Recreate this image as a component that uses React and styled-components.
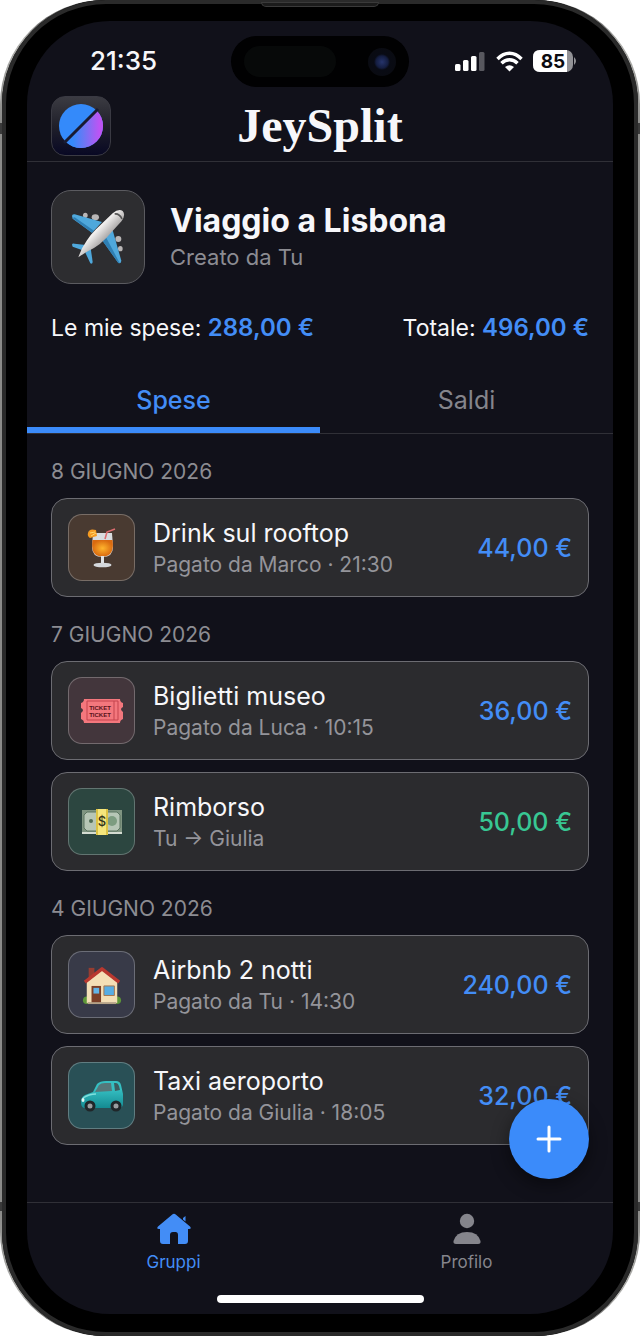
import React, { useState } from 'react';
import styled, { createGlobalStyle } from 'styled-components';

const GlobalStyle = createGlobalStyle`
  * {
    box-sizing: border-box;
  }

  body {
    margin: 0;
    background: #fff;
    font-family: Inter, 'Liberation Sans', sans-serif;
    color: #f7f7fa;
  }

  button {
    font: inherit;
    border: none;
    padding: 0;
    background: none;
    cursor: pointer;
  }
`;

// the two dark stops are the antenna bands
const Phone = styled.div`
  padding: 0 2px;
  border-radius: 104px;
  background: linear-gradient(
    #333 0,
    #b0b0ad 40px,
    #8c8c8a 123px,
    #3a3a3a 123px 134px,
    #8c8c8a 134px,
    #8c8c8a calc(100% - 134px),
    #3a3a3a calc(100% - 134px) calc(100% - 125px),
    #8c8c8a calc(100% - 125px),
    #b0b0ad calc(100% - 40px),
    #333 100%
  );
`;

const Bezel = styled.div`
  position: relative;
  padding: 21px 25px 22px;
  border-radius: 104px;
  background: #000;
  box-shadow: inset 0 0 0 4px #2a2a2a;
`;

const Speaker = styled.div`
  position: absolute;
  top: 2px;
  left: 50%;
  width: 118px;
  height: 5px;
  margin-left: -59px;
  border: 1px solid #3a3a3a;
  border-radius: 0 0 5px 5px;
  background: #1b1b1b;
`;

const Screen = styled.div`
  position: relative;
  border-radius: 83px;
  background: #11111a;
  overflow: hidden;
`;

const StatusBar = styled.div`
  display: flex;
  justify-content: space-between;
  align-items: center;
  height: 69px;
  padding: 11px 36px 0 63px;
`;

const Clock = styled.time`
  font-size: 26px;
  line-height: 32px;
  font-weight: 500;
`;

const Island = styled.div`
  position: absolute;
  top: 15px;
  left: 50%;
  display: flex;
  align-items: center;
  justify-content: space-between;
  width: 178px;
  height: 51px;
  margin-left: -89px;
  padding: 0 13px;
  border-radius: 26px;
  background: #010102;
`;

const Sensor = styled.div`
  width: 92px;
  height: 31px;
  border-radius: 16px;
  background: #070909;
`;

const Lens = styled.div`
  width: 28px;
  height: 28px;
  border-radius: 50%;
  background: radial-gradient(circle, #26346b 0, #141d40 6px, #090b14 8px, #0a0b10 100%);
`;

const StatusIcons = styled.div`
  display: flex;
  align-items: center;
  gap: 10px;
`;

const Header = styled.header`
  display: grid;
  grid-template-columns: 60px 1fr 60px;
  align-items: center;
  padding: 6px 24px 5px;
  border-bottom: 1px solid #303037;
`;

const LogoTile = styled.div`
  display: grid;
  place-items: center;
  width: 60px;
  height: 60px;
  border: 1px solid #3a3a43;
  border-radius: 14px;
  background: linear-gradient(#3b3b42, #20202a 50%, #080824);
`;

const Brand = styled.h1`
  margin: 0;
  font-family: 'Liberation Serif', serif;
  font-size: 48px;
  line-height: 56px;
  font-weight: 700;
  text-align: center;
`;

const Group = styled.section`
  display: flex;
  align-items: center;
  gap: 25px;
  padding: 28px 24px;
`;

const GroupIcon = styled.div`
  display: grid;
  place-items: center;
  width: 94px;
  height: 94px;
  border: 1px solid #5b5b60;
  border-radius: 20px;
  background: #2d2d30;
`;

const GroupName = styled.h2`
  margin: 0;
  font-size: 32px;
  line-height: 40px;
  font-weight: 700;
`;

const GroupMeta = styled.p`
  margin: 0;
  font-size: 22px;
  line-height: 32px;
  color: #8c8c92;
`;

const Summary = styled.div`
  display: flex;
  justify-content: space-between;
  padding: 0 24px 22px;
  font-size: 23px;
  line-height: 32px;
`;

const Figure = styled.strong`
  font-size: 24px;
  font-weight: 600;
  color: #438df6;
`;

const Tabs = styled.div`
  display: grid;
  grid-template-columns: 1fr 1fr;
  border-bottom: 1px solid #303037;
`;

const Tab = styled.button`
  height: 67px;
  && {
    padding-top: 6px;
    border-bottom: 6px solid ${props => (props.$active ? '#3b8bfa' : 'transparent')};
    font-size: 25px;
    font-weight: ${props => (props.$active ? 500 : 400)};
    color: ${props => (props.$active ? '#438df6' : '#85858c')};
  }
`;

const Feed = styled.main`
  padding: 0 24px 57px;
`;

const DateLabel = styled.h3`
  margin: 0;
  padding: 25px 0 13px;
  font-size: 21px;
  line-height: 26px;
  font-weight: 400;
  color: #8c8c92;
`;

const Cards = styled.div`
  display: grid;
  gap: 12px;
`;

const Card = styled.article`
  display: flex;
  align-items: center;
  gap: 18px;
  padding: 15px 16px;
  border: 1px solid #6c6c72;
  border-radius: 16px;
  background: #2b2b2e;
`;

const CardIcon = styled.div`
  display: grid;
  place-items: center;
  width: 67px;
  height: 67px;
  border: 1px solid rgba(255, 255, 255, 0.26);
  border-radius: 14px;
  background: ${props => props.$tint};
`;

const CardText = styled.div`
  flex: 1;
  padding-top: 2px;
`;

const CardTitle = styled.div`
  font-size: 25px;
  line-height: 32px;
`;

const CardMeta = styled.div`
  font-size: 21px;
  line-height: 32px;
  color: #94949a;
`;

const Amount = styled.div`
  font-size: 25px;
  line-height: 32px;
  font-weight: 500;
  color: ${props => (props.$refund ? '#38c793' : '#438df6')};
`;

const Footer = styled.footer`
  position: relative;
  border-top: 1px solid #303037;
`;

const AddButton = styled.button`
  position: absolute;
  right: 24px;
  bottom: 100%;
  display: grid;
  place-items: center;
  width: 80px;
  height: 80px;
  margin-bottom: 24px;
  && {
    border-radius: 50%;
    background: #3b8bfa;
    box-shadow: 0 6px 18px rgba(0, 0, 0, 0.45);
  }
`;

const Nav = styled.nav`
  display: grid;
  grid-template-columns: 1fr 1fr;
`;

const NavLink = styled.a`
  display: flex;
  flex-direction: column;
  align-items: center;
  gap: 5px;
  padding: 10px 0 21px;
  font-size: 17px;
  line-height: 24px;
  text-decoration: none;
  color: ${props => (props.$active ? '#438df6' : '#85858c')};
`;

const HomeBar = styled.div`
  width: 207px;
  height: 8px;
  margin: 0 auto 11px;
  border-radius: 4px;
  background: #fff;
`;

const PlaneIcon = () => (
  <svg width="54" height="56" viewBox="35 41 162 168" aria-hidden="true">
    <defs>
      <linearGradient id="fuselage" x1="0.35" y1="0.35" x2="0.65" y2="0.65">
        <stop offset="0.2" stopColor="#f4f2f1" />
        <stop offset="0.9" stopColor="#a5a2a2" />
      </linearGradient>
    </defs>
    <g fill="#b9b6b6">
      <ellipse cx="78" cy="60" rx="7" ry="8" />
      <ellipse cx="108" cy="66" rx="11" ry="9" />
      <ellipse cx="177" cy="131" rx="9" ry="9" />
      <ellipse cx="183" cy="160" rx="7" ry="8" />
    </g>
    <path d="M38 62Q38 56 46 57L128 80 98 112 40 70Z" fill="#4fa8dc" />
    <path d="M39 68 98 112 104 106 46 66Z" fill="#2f7fb4" />
    <path d="M128 134 160 105 186 196Q185 206 177 203Z" fill="#4fa8dc" />
    <path d="M128 134 177 203 181 203 140 126Z" fill="#2f7fb4" />
    <path d="M38 148Q39 143 46 145L86 150 74 166 40 154Z" fill="#4fa8dc" />
    <path d="M78 172 94 158 100 200Q99 207 93 204Z" fill="#4fa8dc" />
    <path
      d="M57 186Q66 158 82 136 92 120 110 102L160 54Q178 39 190 47 200 58 187 77L140 129Q122 148 104 158 86 166 57 186Z"
      fill="url(#fuselage)"
    />
    <path d="M166 56Q180 54 188 71" fill="none" stroke="#555" strokeWidth="5" />
  </svg>
);

const DrinkIcon = () => (
  <svg width="30" height="40" viewBox="0 0 30 40" aria-hidden="true">
    <defs>
      <radialGradient id="juice">
        <stop offset="0" stopColor="#ffb52d" />
        <stop offset="1" stopColor="#d96a10" />
      </radialGradient>
    </defs>
    <path d="M6 5H25L26 19Q26 29 15.500 29T5 19Z" fill="#d9dcdf" />
    <path d="M5.500 12H25.500Q28 28.500 15.500 28.500T5.500 12Z" fill="url(#juice)" />
    <path d="M18 11 20 4 28 1" fill="none" stroke="#dc6d70" strokeWidth="1.600" />
    <path d="M1 5Q2 0 9 2L10 8 3 10Q0 8 1 5Z" fill="#f69b21" />
    <path d="M3 5 8 4M4 8 9 5" stroke="#ffd66e" />
    <path d="M15.500 28V36" stroke="#dfe2e5" strokeWidth="3" />
    <ellipse cx="15.500" cy="37" rx="9" ry="2.300" fill="#d5d8dc" />
  </svg>
);

const TicketIcon = () => (
  <svg width="44" height="26" viewBox="0 0 44 26" aria-hidden="true">
    <path
      d="M4 1H40Q40 4 43 5V9Q39 11 43 14V21Q40 22 40 25H4Q4 22 1 21V15Q5 12 1 10V5Q4 4 4 1Z"
      fill="#f4777d"
    />
    <path d="M7 3H38V22H7ZM34 3V22" fill="none" stroke="#c4454f" />
    <g fill="#57131a" fontFamily="'Liberation Sans Narrow', 'Liberation Sans', sans-serif" fontSize="6" fontWeight="700" textAnchor="middle">
      <text x="20" y="12">TICKET</text>
      <text x="20" y="19">TICKET</text>
    </g>
  </svg>
);

const CashIcon = () => (
  <svg width="42" height="28" viewBox="0 0 42 28" aria-hidden="true">
    <rect x="1" y="2" width="40" height="23" fill="#7f9481" />
    <rect x="1" y="24" width="40" height="2" fill="#d5dcd2" />
    <path d="M6 4H36L39 7V20L36 23H6L3 20V7Z" fill="#b7c6b6" stroke="#5c7560" />
    <circle cx="10" cy="13" r="2" fill="#516d57" />
    <circle cx="31" cy="13" r="5" fill="#7d9c80" />
    <rect x="15" y="1" width="12" height="26" fill="#dcc243" />
    <rect x="17" y="1" width="8" height="26" fill="#f5e67c" />
    <text x="21" y="18" fontSize="13" fontWeight="500" textAnchor="middle" fill="#33331a">$</text>
  </svg>
);

const HouseIcon = () => (
  <svg width="40" height="40" viewBox="0 0 42 42" aria-hidden="true">
    <path d="M7 3H13V15H7Z" fill="#963d31" />
    <circle cx="5" cy="37" r="4" fill="#5d9638" />
    <circle cx="37" cy="37" r="4" fill="#5d9638" />
    <path d="M5 18 21 5 37 18V40H5Z" fill="#f4dfb6" />
    <path d="M3 18 21 4 39 18" fill="none" stroke="#b9382f" strokeWidth="3.500" strokeLinejoin="round" />
    <path d="M10 22H20V40H10Z" fill="#7b3f27" />
    <path d="M12 24H18V30H12Z" fill="#62b4e6" />
    <path d="M23 22H34V32H23Z" fill="#57ade4" stroke="#a8754a" />
    <path d="M6 39H36V41H6Z" fill="#b5a287" />
  </svg>
);

const CarIcon = () => (
  <svg width="44" height="32" viewBox="0 0 44 32" aria-hidden="true">
    <defs>
      <linearGradient id="paint" x1="0" y1="0" x2="0" y2="1">
        <stop offset="0.3" stopColor="#35bfc2" />
        <stop offset="1" stopColor="#148b92" />
      </linearGradient>
    </defs>
    <path
      d="M1 22Q1 17 5 15L13 12 17 4Q20 1 26 1H36Q40 1 41 5L43 14V25Q42 28 39 28H5Q1 28 1 22Z"
      fill="url(#paint)"
    />
    <path d="M15 12 19 5Q21 3 25 3H31L32 11Z" fill="#56777a" />
    <path d="M34 3H36Q38 3 39 6L40 10 35 11Z" fill="#3c5c60" />
    <path d="M3 18Q9 14 16 14" fill="none" stroke="#7fe0de" strokeWidth="1.500" />
    <ellipse cx="3" cy="20" rx="1.500" ry="2" fill="#e3f8f6" />
    <g fill="#9a9ea1" stroke="#202629" strokeWidth="3">
      <circle cx="10" cy="26" r="4" />
      <circle cx="36" cy="26" r="4" />
    </g>
  </svg>
);

const LogoMark = () => (
  <svg width="46" height="46" viewBox="0 0 46 46" aria-hidden="true">
    <defs>
      <linearGradient id="mark" x1="0" y1="0" x2="1" y2="0">
        <stop offset="0.2" stopColor="#3689fb" />
        <stop offset="0.5" stopColor="#6c77f5" />
        <stop offset="0.9" stopColor="#bd54f4" />
      </linearGradient>
    </defs>
    <circle cx="23" cy="23" r="22" fill="#348afa" />
    <path d="M7.400 38.600A22 22 0 0 0 38.600 7.400Z" fill="url(#mark)" />
    <path d="M6 40 40 6" stroke="#191b33" strokeWidth="3" />
  </svg>
);

const SignalIcon = () => (
  <svg width="31" height="21" viewBox="0 0 31 21" aria-hidden="true">
    <g fill="#fff">
      <rect x="0" y="13" width="5.500" height="7" rx="1.500" />
      <rect x="8" y="9" width="5.500" height="11" rx="1.500" />
      <rect x="16" y="5" width="5.500" height="15" rx="1.500" />
      <rect x="24" y="1" width="5.500" height="19" rx="1.500" opacity="0.3" />
    </g>
  </svg>
);

const WifiIcon = () => (
  <svg width="27" height="21" viewBox="0 0 27 21" aria-hidden="true">
    <g fill="none" stroke="#fff" strokeWidth="3.400">
      <path d="M1.500 8Q7 2.200 13.500 2.200T25.500 8" />
      <path d="M5.500 12.300Q9 8.700 13.500 8.700T21.500 12.300" />
    </g>
    <path d="M9 16Q13.500 12.500 18 16L13.500 20.500Z" fill="#fff" />
  </svg>
);

const BatteryIcon = () => (
  <svg width="44" height="22" viewBox="0 0 44 22" role="img" aria-label="85%">
    <rect width="40" height="22" rx="7" fill="#929296" />
    <path d="M7 0H34V22H7Q0 22 0 15V7Q0 0 7 0Z" fill="#fff" />
    <path d="M41 7Q45 11 41 15Z" fill="#929296" />
    <text x="20" y="18" fontSize="19" fontWeight="700" textAnchor="middle" fill="#0b0b10">85</text>
  </svg>
);

const HomeIcon = () => (
  <svg width="34" height="32" viewBox="0 0 34 32" fill="currentColor" aria-hidden="true">
    <path d="M15 1.700Q17 0 19 1.700L33 13.500Q35 16 32 16H31V28Q31 31 28 31H21V22Q21 19 18.500 19H16Q13 19 13 22V31H6Q3 31 3 28V16H2Q-1 16 1 13.500Z" />
    <path d="M26 5 28.500 3V8.500L26 6.500Z" />
  </svg>
);

const PersonIcon = () => (
  <svg width="28" height="32" viewBox="0 0 28 32" fill="currentColor" aria-hidden="true">
    <circle cx="14" cy="8" r="7.200" />
    <path d="M3 31Q0 31 0.500 28Q3 19 14 19T27.500 28Q28 31 25 31Z" />
  </svg>
);

const days = [
  {
    date: '8 GIUGNO 2026',
    items: [
      { title: 'Drink sul rooftop', meta: 'Pagato da Marco · 21:30', amount: '44,00 €', tint: '#493a31', icon: DrinkIcon },
    ],
  },
  {
    date: '7 GIUGNO 2026',
    items: [
      { title: 'Biglietti museo', meta: 'Pagato da Luca · 10:15', amount: '36,00 €', tint: '#43363c', icon: TicketIcon },
      { title: 'Rimborso', meta: 'Tu → Giulia', amount: '50,00 €', tint: '#2c4640', icon: CashIcon, refund: true },
    ],
  },
  {
    date: '4 GIUGNO 2026',
    items: [
      { title: 'Airbnb 2 notti', meta: 'Pagato da Tu · 14:30', amount: '240,00 €', tint: '#383a48', icon: HouseIcon },
      { title: 'Taxi aeroporto', meta: 'Pagato da Giulia · 18:05', amount: '32,00 €', tint: '#295056', icon: CarIcon },
    ],
  },
];

const ExpenseCard = ({ item }) => {
  const Icon = item.icon;

  return (
    <Card>
      <CardIcon $tint={item.tint}>
        <Icon />
      </CardIcon>
      <CardText>
        <CardTitle>{item.title}</CardTitle>
        <CardMeta>{item.meta}</CardMeta>
      </CardText>
      <Amount $refund={item.refund}>{item.amount}</Amount>
    </Card>
  );
};

const App = () => {
  const [tab, setTab] = useState('Spese');

  return (
    <Phone>
      <GlobalStyle />
      <Bezel>
        <Speaker />
        <Screen>
          <StatusBar>
            <Clock>21:35</Clock>
            <Island>
              <Sensor />
              <Lens />
            </Island>
            <StatusIcons>
              <SignalIcon />
              <WifiIcon />
              <BatteryIcon />
            </StatusIcons>
          </StatusBar>

          <Header>
            <LogoTile>
              <LogoMark />
            </LogoTile>
            <Brand>JeySplit</Brand>
          </Header>

          <Group>
            <GroupIcon>
              <PlaneIcon />
            </GroupIcon>
            <div>
              <GroupName>Viaggio a Lisbona</GroupName>
              <GroupMeta>Creato da Tu</GroupMeta>
            </div>
          </Group>

          <Summary>
            <span>Le mie spese: <Figure>288,00 €</Figure></span>
            <span>Totale: <Figure>496,00 €</Figure></span>
          </Summary>

          <Tabs role="tablist">
            {['Spese', 'Saldi'].map(name => (
              <Tab
                key={name}
                type="button"
                role="tab"
                aria-selected={tab === name}
                $active={tab === name}
                onClick={() => setTab(name)}
              >
                {name}
              </Tab>
            ))}
          </Tabs>

          <Feed>
            {days.map(day => (
              <section key={day.date}>
                <DateLabel>{day.date}</DateLabel>
                <Cards>
                  {day.items.map(item => (
                    <ExpenseCard key={item.title} item={item} />
                  ))}
                </Cards>
              </section>
            ))}
          </Feed>

          <Footer>
            <AddButton type="button" aria-label="Aggiungi spesa">
              <svg width="26" height="28" viewBox="0 0 26 28" stroke="#fff" strokeWidth="3" strokeLinecap="round" aria-hidden="true">
                <path d="M13 2V26M2 14H24" />
              </svg>
            </AddButton>
            <Nav>
              <NavLink href="#gruppi" $active>
                <HomeIcon />
                Gruppi
              </NavLink>
              <NavLink href="#profilo">
                <PersonIcon />
                Profilo
              </NavLink>
            </Nav>
            <HomeBar />
          </Footer>
        </Screen>
      </Bezel>
    </Phone>
  );
};

export default App;
